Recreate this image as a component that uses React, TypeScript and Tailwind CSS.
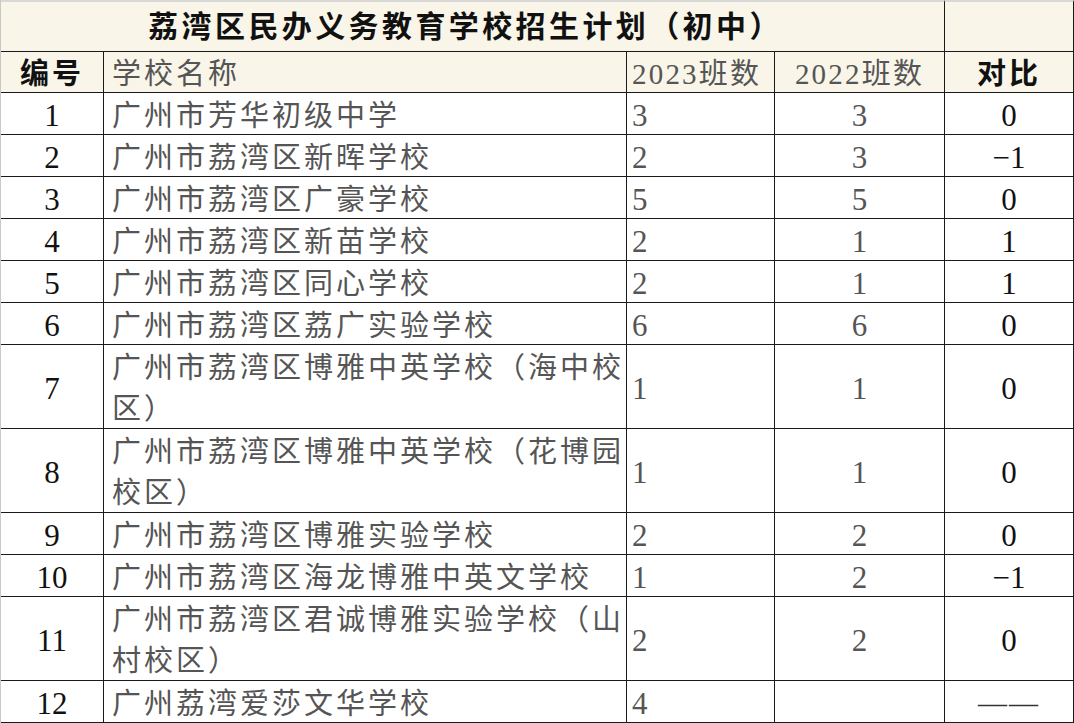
import React from 'react'

interface Row {
  no: string
  name: string[]
  y2023: string
  y2022: string
  diff: string
}

const rows: Row[] = [
  { no: '1', name: ['广州市芳华初级中学'], y2023: '3', y2022: '3', diff: '0' },
  { no: '2', name: ['广州市荔湾区新晖学校'], y2023: '2', y2022: '3', diff: '−1' },
  { no: '3', name: ['广州市荔湾区广豪学校'], y2023: '5', y2022: '5', diff: '0' },
  { no: '4', name: ['广州市荔湾区新苗学校'], y2023: '2', y2022: '1', diff: '1' },
  { no: '5', name: ['广州市荔湾区同心学校'], y2023: '2', y2022: '1', diff: '1' },
  { no: '6', name: ['广州市荔湾区荔广实验学校'], y2023: '6', y2022: '6', diff: '0' },
  { no: '7', name: ['广州市荔湾区博雅中英学校（海中校', '区）'], y2023: '1', y2022: '1', diff: '0' },
  { no: '8', name: ['广州市荔湾区博雅中英学校（花博园', '校区）'], y2023: '1', y2022: '1', diff: '0' },
  { no: '9', name: ['广州市荔湾区博雅实验学校'], y2023: '2', y2022: '2', diff: '0' },
  { no: '10', name: ['广州市荔湾区海龙博雅中英文学校'], y2023: '1', y2022: '2', diff: '−1' },
  { no: '11', name: ['广州市荔湾区君诚博雅实验学校（山', '村校区）'], y2023: '2', y2022: '2', diff: '0' },
  { no: '12', name: ['广州荔湾爱莎文华学校'], y2023: '4', y2022: '', diff: '——' },
]

const font = "font-['Liberation_Serif','Noto_Sans_CJK_SC',serif]"
const cell = 'border-r border-b border-[#1a1a1a] flex items-center pt-[5px]'

export default function App() {
  return (
    <div className={`w-[1074px] h-[723px] overflow-hidden bg-white border-l border-[#c8c8c8] ${font}`}>
      <div className="grid grid-cols-[103px_523px_148px_170px_129px]">
        {/* title */}
        <div className="col-span-4 h-[52px] border-t-2 border-t-[#d8d8d8] border-r border-b border-[#1a1a1a] bg-[#f9f6e9] flex items-center justify-center pr-[14px]">
          <span className="text-[30px] font-bold tracking-[3.4px] text-[#111]">荔湾区民办义务教育学校招生计划（初中）</span>
        </div>
        <div className="h-[52px] border-t-2 border-t-[#d8d8d8] border-r border-b border-[#1a1a1a] bg-[#f9f6e9]" />

        {/* header */}
        <div className={`${cell} h-[41px] bg-[#f9f6e9] justify-center`}>
          <span className="text-[29px] font-bold tracking-[3px] text-[#111]">编号</span>
        </div>
        <div className={`${cell} h-[41px] bg-[#f9f6e9] pl-[8px]`}>
          <span className="text-[29px] tracking-[3px] text-[#555]">学校名称</span>
        </div>
        <div className={`${cell} h-[41px] bg-[#f9f6e9] pl-[5px]`}>
          <span className="text-[29px] tracking-[2.2px] text-[#555]">2023班数</span>
        </div>
        <div className={`${cell} h-[41px] bg-[#f9f6e9] justify-center`}>
          <span className="text-[29px] tracking-[2.2px] text-[#555]">2022班数</span>
        </div>
        <div className={`${cell} h-[41px] bg-[#f9f6e9] justify-center`}>
          <span className="text-[29px] font-bold tracking-[3px] text-[#111]">对比</span>
        </div>

        {rows.map(r => {
          const h = r.name.length > 1 ? 'h-[84px]' : 'h-[42px]'
          return (
            <React.Fragment key={r.no}>
              <div className={`${cell} ${h} justify-center text-[31px] text-[#111]`}>{r.no}</div>
              <div className={`${cell} ${h} pl-[8px]`}>
                <div className="flex flex-col text-[29px] leading-[41px] tracking-[3px] text-[#555] whitespace-nowrap">
                  {r.name.map(line => (
                    <span key={line}>{line}</span>
                  ))}
                </div>
              </div>
              <div className={`${cell} ${h} pl-[5px] text-[31px] text-[#555]`}>{r.y2023}</div>
              <div className={`${cell} ${h} justify-center text-[31px] text-[#555]`}>{r.y2022}</div>
              <div className={`${cell} ${h} justify-center text-[31px] text-[#111]`}>
                {r.diff === '——' ? <span className="text-[29px] tracking-[2px] text-[#333]">——</span> : r.diff}
              </div>
            </React.Fragment>
          )
        })}
      </div>
    </div>
  )
}
